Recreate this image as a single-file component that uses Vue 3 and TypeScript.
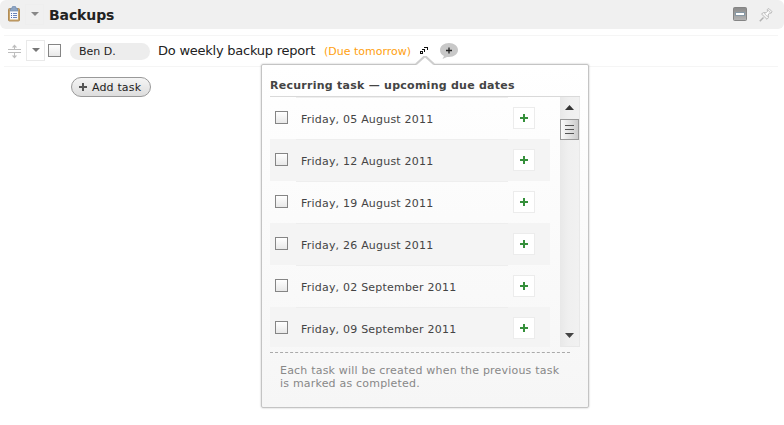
<script setup lang="ts">
import { ref } from 'vue'

interface DueDate {
  label: string
  selected: boolean
}

const done = ref(false)
const dates = ref<DueDate[]>([
  { label: 'Friday, 05 August 2011', selected: false },
  { label: 'Friday, 12 August 2011', selected: false },
  { label: 'Friday, 19 August 2011', selected: false },
  { label: 'Friday, 26 August 2011', selected: false },
  { label: 'Friday, 02 September 2011', selected: false },
  { label: 'Friday, 09 September 2011', selected: false },
])
</script>

<template>
  <main class="page">
    <header class="header">
      <svg class="clipboard" width="14" height="16" viewBox="0 0 14 16">
        <rect x="1.500" y="2.500" width="11" height="12.500" rx="1" fill="#c9a468" stroke="#b08c58" />
        <rect x="3" y="4" width="8" height="9.500" fill="#f8faff" />
        <path d="M4 2h1.500V.5h3V2H10l1 3H3z" fill="#8fa6c4" stroke="#6f8bb2" stroke-width=".7" />
        <path d="M4 7.500h1M4 9.500h1M4 11.500h1" stroke="#4d6caf" />
        <path d="M6 7.500h4M6 9.500h4M6 11.500h4" stroke="#6b85bd" />
      </svg>
      <button class="menu head-menu" aria-label="List menu">
        <svg width="8" height="4" viewBox="0 0 8 4"><path d="M0 0h8L4 4z" fill="#888" /></svg>
      </button>
      <h1 class="title">Backups</h1>
      <svg class="collapse" width="14" height="14" viewBox="0 0 14 14">
        <defs>
          <linearGradient id="steel" x2="0" y2="1"><stop stop-color="#8a8a8a" /><stop offset="1" stop-color="#b4b4b4" /></linearGradient>
        </defs>
        <rect x=".5" y=".5" width="13" height="13" rx="1" fill="url(#steel)" stroke="#858585" />
        <rect x="2" y="5" width="10" height="4" fill="#8799a6" />
        <rect x="3" y="6" width="8" height="2" fill="#fff" />
      </svg>
      <svg class="pin" width="14" height="14" viewBox="0 0 14 14">
        <path d="M4.500 9.500L.8 13.200" stroke="#b2b2b2" stroke-width="1.500" />
        <path d="M2.500 6l2-1.500 2.500.3 1.500-1.500-.3-1.800 1.700-1 3 3-.8 1.700-1.600-.2L9.200 7l.3 2.500L8 11.300z" fill="#f2f2f2" stroke="#bcbcbc" />
        <path d="M5 5l4 4M9 2l2.500 2.500" stroke="#cfcfcf" />
        <path d="M7.300 6.500L9.500 4.300" stroke="#fff" stroke-width="1.500" />
      </svg>
    </header>

    <section class="task">
      <svg class="move" width="13" height="15" viewBox="0 0 13 15">
        <path d="M0 5.500h13M0 8.500h13M6.500 2v3M6.500 9v4" stroke="#bdbdbd" />
        <path d="M3.800 3.500L6.500.4l2.700 3.100zM3.800 11.500l2.700 3 2.700-3z" fill="#bdbdbd" />
      </svg>
      <button class="menu row-menu" aria-label="Task menu">
        <svg width="8" height="4" viewBox="0 0 8 4"><path d="M0 0h8L4 4z" fill="#777" /></svg>
      </button>
      <input v-model="done" class="check" type="checkbox" aria-label="Done" />
      <span class="owner">Ben D.</span>
      <span class="name">Do weekly backup report</span>
      <span class="due">(Due tomorrow)</span>
      <div class="recurring">
        <svg class="repeat" width="8" height="8" viewBox="0 0 8 8" shape-rendering="crispEdges">
          <path d="M.5 4.500h2v2h-2zM2 2.500h2.500V5M4 .5h3.500V3" fill="none" stroke="#111" />
        </svg>
        <aside class="popup">
          <svg class="pointer" width="20" height="9" viewBox="0 0 20 9">
            <path d="M1.500 8L10 0l8.500 8v1h-17z" fill="#fff" />
            <path d="M1 8.200L10 0l9 8.200" fill="none" stroke="#cecece" stroke-width="2.200" />
          </svg>
          <h2 class="popup-title">Recurring task — upcoming due dates</h2>
          <div class="picker">
            <div class="dates">
              <div v-for="date in dates" :key="date.label" class="date">
                <input v-model="date.selected" class="check small" type="checkbox" :aria-label="date.label" />
                <span class="label">{{ date.label }}</span>
                <button class="add" aria-label="Create task">
                  <svg width="8" height="8" viewBox="0 0 8 8"><path d="M4 0v8M0 4h8" stroke="#35903b" stroke-width="2" /></svg>
                </button>
              </div>
            </div>
            <div class="scrollbar">
              <svg class="up" width="9" height="5" viewBox="0 0 9 5"><path d="M0 5l4.500-5L9 5z" fill="#333" /></svg>
              <div class="thumb"><i /><i /><i /></div>
              <svg class="down" width="9" height="5" viewBox="0 0 9 5"><path d="M0 0h9L4.500 5z" fill="#444" /></svg>
            </div>
          </div>
          <p class="note">Each task will be created when the previous task<br />is marked as completed.</p>
        </aside>
      </div>
      <svg class="comment" width="18" height="17" viewBox="0 0 18 17">
        <path d="M9 0c5 0 9 3 9 7s-4 7-9 7l-2-.1L2.500 16 4 13C1.500 12 0 10 0 7c0-4 4-7 9-7z" fill="#c8c8c8" />
        <path d="M9 4.500v6M6 7.500h6" stroke="#222" stroke-width="1.300" />
      </svg>
    </section>

    <button class="add-task">
      <svg width="8" height="8" viewBox="0 0 8 8"><path d="M4 0v8M0 4h8" stroke="#555" stroke-width="2" /></svg>
      <span>Add task</span>
    </button>
  </main>
</template>

<style>
body {
  background: #fff;
}
</style>

<style scoped>
* {
  box-sizing: border-box;
}
.page {
  width: 784px;
  height: 425px;
  overflow: hidden;
  font-family: Verdana, "DejaVu Sans", sans-serif;
  font-size: 11px;
  color: #222;
}
svg {
  display: block;
  flex: none;
}
button {
  font: inherit;
  color: inherit;
  padding: 0;
}
.header {
  display: flex;
  align-items: center;
  height: 29px;
  padding: 0 11px 0 7px;
  border-radius: 6px;
  background: #f0f0f0;
}
.clipboard {
  margin: 0 4px 2px 0;
}
.menu {
  display: flex;
  flex: none;
  align-items: center;
  justify-content: center;
  width: 19px;
  height: 21px;
  border: 1px solid #e9e9e9;
  background: #fff;
}
.row-menu {
  margin-top: -1px;
}
.row-menu svg {
  margin-top: -1px;
}
.head-menu {
  border-color: #eee;
  background: transparent;
}
.head-menu svg {
  margin-top: -1px;
}
.title {
  flex: 1;
  margin: 0 0 0 5px;
  padding-top: 1px;
  font-size: 14px;
  line-height: 18px;
  letter-spacing: -0.1px;
}
.collapse {
  margin: -1px 12px 0 0;
}
.task {
  display: flex;
  align-items: center;
  height: 32px;
  margin: 6px 6px 0 4px;
  padding-left: 4px;
  border-top: 1px solid #f5f5f5;
  border-bottom: 1px solid #f5f5f5;
}
.move {
  margin: 1px 5px 0 0;
}
.check {
  appearance: none;
  flex: none;
  width: 13px;
  height: 13px;
  margin: -1px 9px 0 3px;
  border: 1px solid #858585;
  background: linear-gradient(#fff, #e8e8e8);
}
.owner {
  width: 80px;
  height: 17px;
  padding-left: 9px;
  border-radius: 9px;
  background: #ededed;
  line-height: 17px;
}
.name {
  width: 157px;
  margin: -2px 0 0 8px;
  font-size: 13px;
  letter-spacing: -0.24px;
  white-space: nowrap;
}
.due {
  width: 87px;
  margin-left: 9px;
  color: #ff9f0f;
  white-space: nowrap;
}
.recurring {
  position: relative;
  width: 8px;
  height: 8px;
  margin-left: 9px;
}
.comment {
  margin-left: 12px;
}
.add-task {
  display: flex;
  align-items: center;
  gap: 5px;
  width: 80px;
  height: 20px;
  margin: 10px 0 0 71px;
  padding-left: 7px;
  border: 1px solid #999;
  border-radius: 10px;
  background: linear-gradient(#f5f5f5, #ddd);
  letter-spacing: 0.15px;
  white-space: nowrap;
}
.popup {
  position: absolute;
  z-index: 2;
  top: 17px;
  left: -159px;
  width: 328px;
  height: 344px;
  padding: 11px 8px 0;
  border: 1px solid #c4c4c4;
  border-radius: 2px;
  box-shadow: 0 0 2px #bbb;
  background: linear-gradient(#fff, #f6f6f6);
}
.pointer {
  position: absolute;
  top: -9px;
  left: 153px;
}
.popup-title {
  height: 20px;
  margin: 0;
  padding-top: 1px;
  font-size: 11px;
  line-height: 18px;
  letter-spacing: 0.26px;
  color: #444;
  white-space: nowrap;
}
.picker {
  display: flex;
  justify-content: space-between;
  height: 252px;
  width: 310px;
  border-top: 1px solid #d9d9d9;
}
.dates {
  width: 280px;
  height: 250px;
  overflow: hidden;
}
.date {
  display: flex;
  align-items: center;
  height: 42px;
  padding-left: 5px;
  color: #444;
}
.date:nth-child(even) {
  background: #f4f4f4;
}
.check.small {
  margin: -2px 8px 0 0;
}
.label {
  width: 212px;
  height: 42px;
  padding-left: 5px;
  border-top: 1px solid #eee;
  line-height: 43px;
  letter-spacing: 0.21px;
}
.add {
  display: flex;
  align-items: center;
  justify-content: center;
  width: 22px;
  height: 22px;
  margin-left: 5px;
  border: 1px solid #ececec;
  background: #fff;
}
.scrollbar {
  display: flex;
  flex-direction: column;
  align-items: center;
  width: 20px;
  height: 250px;
  padding: 8px 0 8px;
  border: 1px solid #e8e8e8;
  border-top: 0;
  background: linear-gradient(90deg, #e9e9e9, #efefef 40%, #f1f1f1);
}
.scrollbar svg {
  margin-right: 2px;
}
.thumb {
  display: flex;
  flex-direction: column;
  align-items: center;
  gap: 3px;
  width: 19px;
  height: 21px;
  margin: 9px 1px 0 0;
  padding-top: 5px;
  border: 1px solid #999;
  background: linear-gradient(90deg, #fafafa, #ccc);
}
.thumb i {
  width: 9px;
  height: 1px;
  background: #555;
}
.scrollbar .down {
  margin-top: auto;
}
.note {
  width: 300px;
  margin: 4px 0 0;
  padding: 11px 0 0 10px;
  border-top: 1px dashed #aaa;
  line-height: 13px;
  letter-spacing: 0.2px;
  color: #888;
  white-space: nowrap;
}
</style>
